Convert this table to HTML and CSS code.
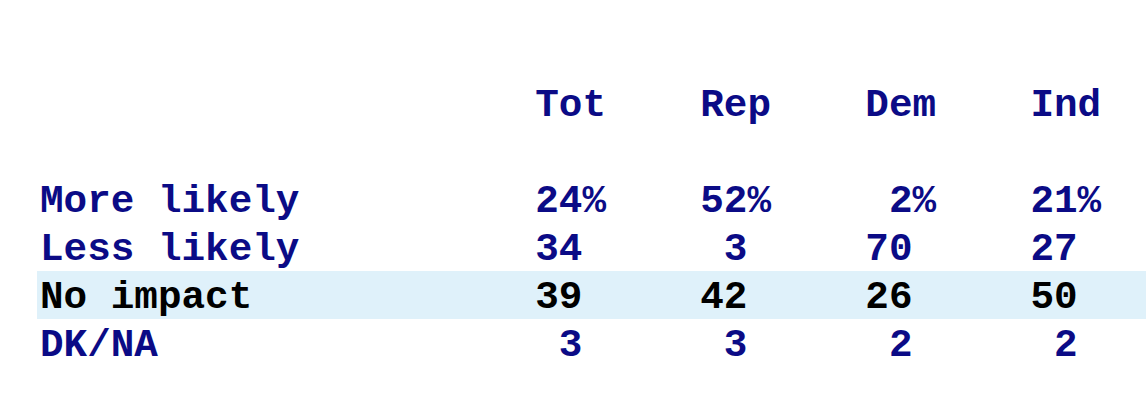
FILE: index.html
```html
<!DOCTYPE html>
<html lang="en">
<head>
    <meta charset="UTF-8">
    <title>Impact on vote</title>
    <link rel="stylesheet" href="styles.css">
</head>
<body>
    <!-- Crosstab by party -->
    <div class="crosstab">
        <div class="row head">
            <span></span>
            <span>Tot</span>
            <span>Rep</span>
            <span>Dem</span>
            <span>Ind</span>
        </div>
        <div class="row">
            <span>More likely</span>
            <span><span class="num">24</span>%</span>
            <span><span class="num">52</span>%</span>
            <span><span class="num">2</span>%</span>
            <span><span class="num">21</span>%</span>
        </div>
        <div class="row">
            <span>Less likely</span>
            <span class="num">34</span>
            <span class="num">3</span>
            <span class="num">70</span>
            <span class="num">27</span>
        </div>
        <div class="row highlight">
            <span>No impact</span>
            <span class="num">39</span>
            <span class="num">42</span>
            <span class="num">26</span>
            <span class="num">50</span>
        </div>
        <div class="row">
            <span>DK/NA</span>
            <span class="num">3</span>
            <span class="num">3</span>
            <span class="num">2</span>
            <span class="num">2</span>
        </div>
    </div>
</body>
</html>
```

FILE: styles.css
```css
body {
    margin: 0;
    background-color: white;
    font-family: "Liberation Mono", "Courier New", monospace;
    font-weight: bold;
    font-size: 39.3px;
    color: #0b0b86;
}

.crosstab {
    margin-left: 37px;
    padding-top: 82px;
}

.row {
    display: grid;
    grid-template-columns: 21ch repeat(4, 7ch);
    box-sizing: border-box;
    padding-left: 3px;
    height: 48px;
    line-height: 48px;
    white-space: pre;
}

.head {
    margin-bottom: 48px;
}

.num {
    display: inline-block;
    width: 2ch;
    text-align: right;
}

/* band sits a little above the text line */
.highlight {
    margin-top: -3px;
    margin-bottom: 3px;
    padding-top: 3px;
    background-color: #dff1fa;
    color: #000;
}
```
